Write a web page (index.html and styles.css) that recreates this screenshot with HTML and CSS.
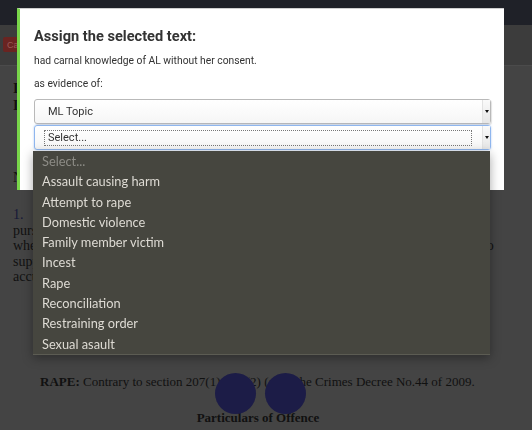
FILE: index.html
```html
<!DOCTYPE html>
<html>
<head>
<meta charset="utf-8">
<link rel="stylesheet" href="styles.css">
</head>
<body>
<header class="topbar"></header>
<div class="subbar"><button class="btn-cancel">Cancel</button></div>
<main class="doc">
  <p class="doc-head"><b>IN THE HIGH COURT OF FIJI</b><br><b>IN THE CRIMINAL JURISDICTION</b></p>
  <p class="doc-name">NAME OF THE ACCUSED PERSON</p>
  <p class="doc-para"><span class="num">1.</span><br>pursuant to the information filed by the Director of Public Prosecutions, the accused<br>where it is alleged that the offence was committed in the presence of a witness, and to<br>support the complainant, and the matter was reported by the complainant against the<br>accused person.</p>
  <p class="doc-count"><b>RAPE:</b> Contrary to section 207(1) and (2) (a) of the Crimes Decree No.44 of 2009.</p>
  <p class="doc-sub"><b>Particulars of Offence</b></p>
</main>

<div class="modal">
  <h2 class="modal-title">Assign the selected text:</h2>
  <p class="quote">had carnal knowledge of AL without her consent.</p>
  <p class="label">as evidence of:</p>
  <div class="select">
    <span class="select-text">ML Topic</span>
    <span class="select-btn"><i class="arrow"></i></span>
  </div>
  <div class="select select-focus">
    <span class="select-text"><span class="focus-ring">Select...</span></span>
    <span class="select-btn"><i class="arrow"></i></span>
    <ul class="menu">
      <li class="placeholder">Select...</li>
      <li>Assault causing harm</li>
      <li>Attempt to rape</li>
      <li>Domestic violence</li>
      <li>Family member victim</li>
      <li>Incest</li>
      <li>Rape</li>
      <li>Reconciliation</li>
      <li>Restraining order</li>
      <li>Sexual asault</li>
    </ul>
  </div>
</div>

<div class="dots"><span class="dot"></span><span class="dot"></span></div>
</body>
</html>
```
FILE: styles.css
```css
html, body {
  margin: 0;
  padding: 0;
}
body {
  background: #444444;
  width: 532px;
  height: 430px;
  overflow: hidden;
  font-family: "Liberation Serif", serif;
  color: #111;
}
.topbar {
  height: 25px;
  background: #1f2128;
}
.subbar {
  height: 40px;
  background: #3c3c3c;
  border-bottom: 1px solid #4b4b4b;
  display: flex;
  align-items: flex-start;
  padding-left: 3px;
}
.btn-cancel {
  margin-top: 12px;
  height: 15px;
  border: 0;
  border-radius: 2px;
  background: #6a2421;
  color: #9a5a57;
  font-family: "Liberation Sans", sans-serif;
  font-size: 9px;
  padding: 0 4px;
}
.doc {
  padding: 14px 35px 0 13px;
  font-size: 14px;
  line-height: 17px;
}
.doc p {
  margin: 0;
  white-space: nowrap;
}
.doc-name {
  margin-top: 55px !important;
}
.doc-para {
  margin-top: 21px !important;
  line-height: 15.6px;
}
.num {
  color: #161838;
}
.doc-count {
  margin: 88px 0 0 27px !important;
  font-size: 13px;
}
.doc-sub {
  margin-top: 19px !important;
  text-align: center;
  padding-left: 6px;
  font-size: 13px;
}

/* modal */
.modal {
  position: fixed;
  left: 17px;
  top: 8px;
  width: 487px;
  height: 182px;
  box-sizing: border-box;
  background: #fff;
  border-left: 3px solid #79d64a;
  border-top: 1px solid #cfcfcf;
  padding: 0 13px 0 14px;
  font-family: Roboto, sans-serif;
  color: #333;
}
.modal-title {
  margin: 17px 0 0;
  font-size: 14.6px;
  line-height: 20px;
  font-weight: 700;
  color: #333;
}
.quote {
  margin: 8px 0 0;
  font-size: 10.3px;
  line-height: 14px;
}
.label {
  margin: 9px 0 0;
  font-size: 10.3px;
  line-height: 14px;
}
.select {
  position: relative;
  margin-top: 8px;
  height: 25px;
  box-sizing: border-box;
  border: 1px solid #b9b9b9;
  border-radius: 3px;
  background: linear-gradient(#ffffff, #f6f6f6);
  display: flex;
  align-items: center;
  box-shadow: 1px 1px 1px rgba(0,0,0,0.12);
}
.select + .select {
  margin-top: 1px;
}
.select-focus {
  border-color: #8fb6ee;
  box-shadow: 0 0 2px rgba(80,140,230,0.5);
}
.select-text {
  flex: 1;
  padding-left: 13px;
  font-size: 11px;
  color: #333;
}
.select-focus .select-text {
  padding-left: 9px;
  padding-right: 10px;
}
.focus-ring {
  display: block;
  height: 14px;
  line-height: 14px;
  padding-left: 3px;
  border: 1px dotted #777;
}
.select-btn {
  width: 7px;
  align-self: stretch;
  border-left: 1px solid #e2e2e2;
  background: linear-gradient(#fafafa, #e6e6e6);
  display: flex;
  align-items: center;
  justify-content: center;
}
.arrow {
  width: 0;
  height: 0;
  border-left: 2.5px solid transparent;
  border-right: 2.5px solid transparent;
  border-top: 3px solid #111;
}

.menu {
  position: absolute;
  left: -2px;
  right: 0;
  top: 25px;
  margin: 0;
  padding: 0;
  list-style: none;
  background: #46463f;
  border-bottom: 1px solid #5c5c53;
  box-shadow: 0 3px 10px rgba(0,0,0,0.35);
  font-family: Lato, sans-serif;
  font-size: 12.8px;
  color: #dedbd4;
  z-index: 2;
}
.menu li {
  height: 20.3px;
  line-height: 21px;
  padding-left: 9px;
}
.menu .placeholder {
  color: #8d8c86;
}

.dots {
  position: fixed;
  left: 215px;
  top: 373px;
  display: flex;
  gap: 9px;
}
.dot {
  width: 41px;
  height: 41px;
  border-radius: 50%;
  background: #1c1c47;
}
```
